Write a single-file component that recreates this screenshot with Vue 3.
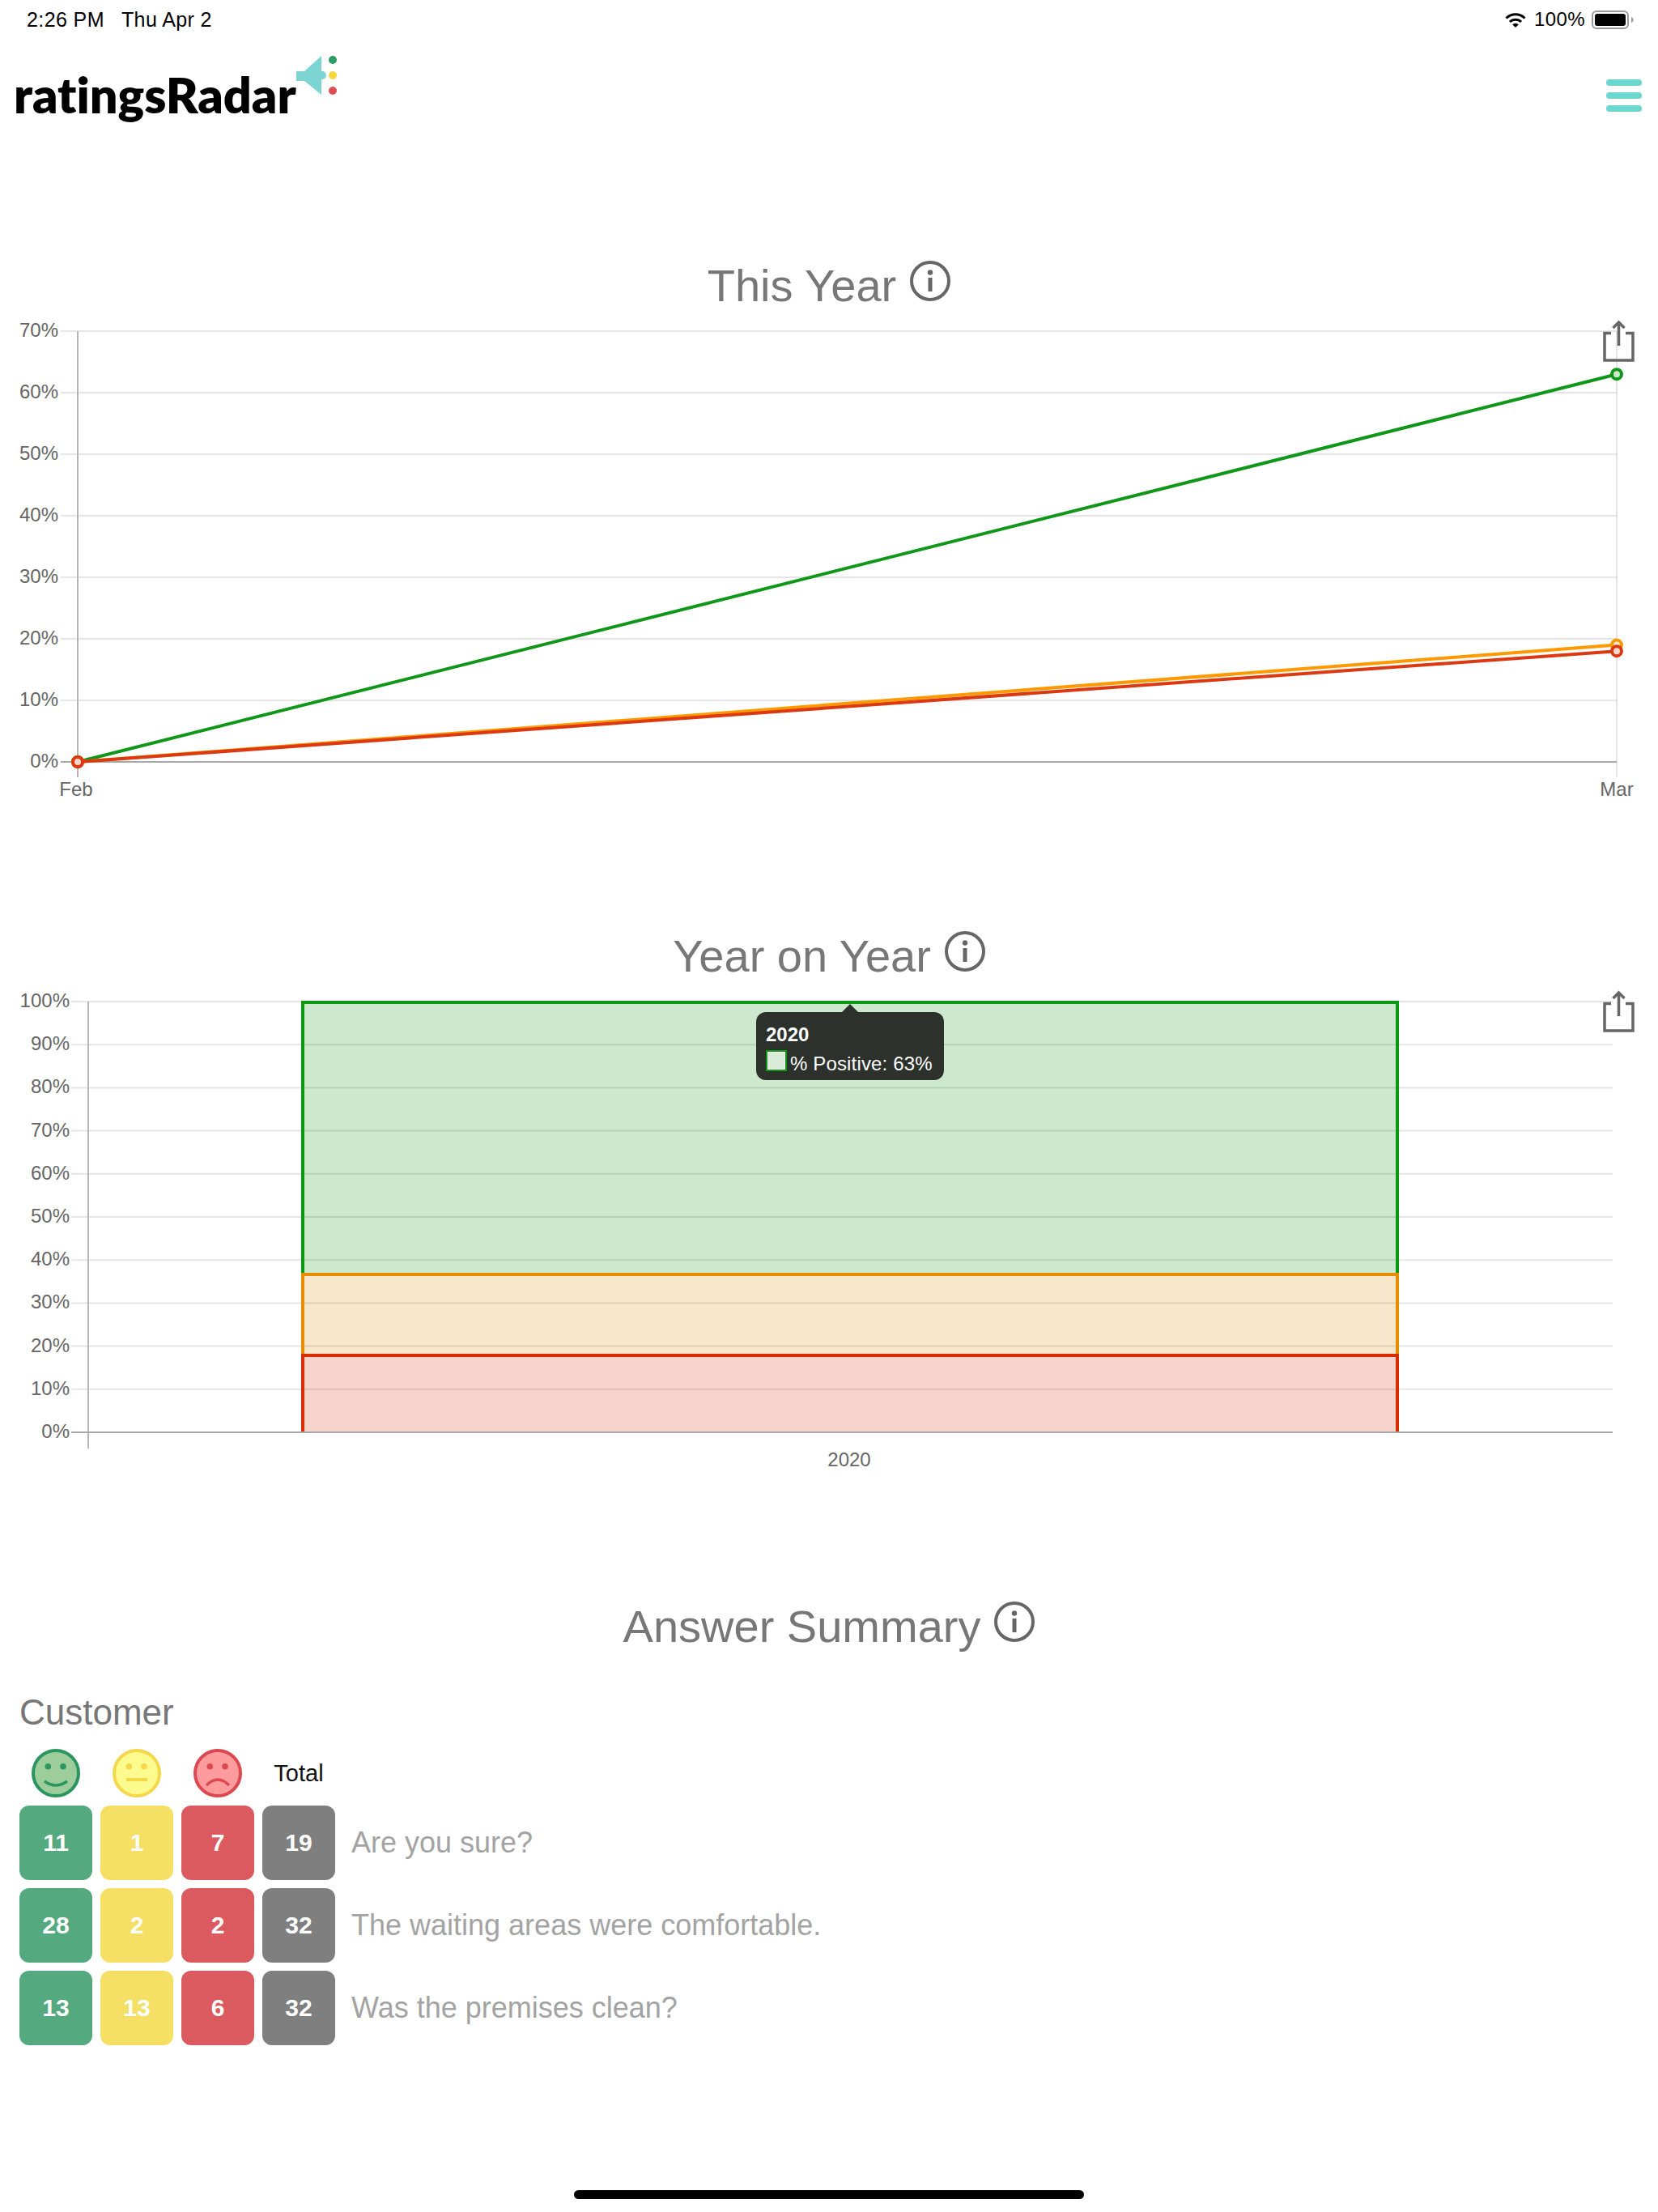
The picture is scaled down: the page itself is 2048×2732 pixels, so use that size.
<template>
  <div class="page">
    <div class="status-bar">
      <div class="status-left">
        <span>2:26 PM</span>
        <span>Thu Apr 2</span>
      </div>
      <div class="status-right">
        <svg class="wifi" width="26" height="19" viewBox="0 0 26 19">
          <path d="M1.5 7.5A16.5 16.5 0 0 1 24.5 7.5" fill="none" stroke="#000" stroke-width="3" />
          <path d="M6 12A10 10 0 0 1 20 12" fill="none" stroke="#000" stroke-width="3" />
          <path d="M13 19L9.2 15.2A5.4 5.4 0 0 1 16.8 15.2Z" fill="#000" />
        </svg>
        <span>100%</span>
        <svg width="52" height="23" viewBox="0 0 52 23">
          <rect x="1" y="1" width="44" height="21" rx="5" fill="none" stroke="#999" stroke-width="2" />
          <rect x="4" y="4" width="38" height="15" rx="3" fill="#000" />
          <path d="M49 8C51 9 51.5 10 51.5 11.5S51 14 49 15Z" fill="#999" />
        </svg>
      </div>
    </div>

    <header class="header">
      <div class="logo">
        <span class="logo-text">ratingsRadar</span>
        <svg class="logo-mark" width="52" height="52" viewBox="0 0 52 52">
          <path d="M1 19H11L32 0V48L11 31H1Z" fill="#7dd5d3" />
          <circle cx="33" cy="24" r="5" fill="#7dd5d3" />
          <circle cx="46" cy="5" r="5" fill="#2b9c64" />
          <circle cx="46" cy="24" r="5" fill="#f5d63f" />
          <circle cx="46" cy="43" r="5" fill="#e04e55" />
        </svg>
      </div>
      <div class="menu">
        <span></span>
        <span></span>
        <span></span>
      </div>
    </header>

    <section class="block">
      <h2 class="block-title">
        <span>This Year</span>
        <svg class="info" width="50" height="50" viewBox="0 0 50 50">
          <circle cx="25" cy="25" r="23" fill="none" stroke="#666" stroke-width="4" />
          <circle cx="25" cy="14.5" r="3.2" fill="#666" />
          <rect x="22.5" y="21" width="5" height="17" fill="#666" />
        </svg>
      </h2>
      <div class="plot">
        <svg class="chart" width="2048" height="610" viewBox="0 0 2048 610">
          <g v-for="t in lineTicks" :key="t.label">
            <line x1="75" x2="1997" :y1="t.y" :y2="t.y" class="grid" />
            <text x="72" :y="t.y + 7" text-anchor="end" class="tick">{{ t.label }}</text>
          </g>
          <line x1="1997" x2="1997" y1="14" y2="565" class="grid" />
          <line x1="96" x2="96" y1="14" y2="565" class="axis-y" />
          <line x1="75" x2="1997" y1="546" y2="546" class="axis-x" />
          <text x="94" y="588" text-anchor="middle" class="tick">Feb</text>
          <text x="1997" y="588" text-anchor="middle" class="tick">Mar</text>
          <g v-for="s in lineSeries" :key="s.color">
            <line x1="96" :y1="lineY(0)" x2="1997" :y2="lineY(s.value)" :stroke="s.color" stroke-width="4" />
            <circle cx="96" :cy="lineY(0)" r="6" :stroke="s.color" stroke-width="4" :fill="s.fill" />
            <circle cx="1997" :cy="lineY(s.value)" r="6" :stroke="s.color" stroke-width="4" :fill="s.fill" />
          </g>
        </svg>
        <svg class="share" width="40" height="54" viewBox="0 0 40 54">
          <path d="M10 16.5H2V50H37V16.5H28" fill="none" stroke="#666" stroke-width="3.5" />
          <path d="M19.5 32V3M12.5 10L19.5 3L26.5 10" fill="none" stroke="#666" stroke-width="3.5" />
        </svg>
      </div>
    </section>

    <section class="block">
      <h2 class="block-title">
        <span>Year on Year</span>
        <svg class="info" width="50" height="50" viewBox="0 0 50 50">
          <circle cx="25" cy="25" r="23" fill="none" stroke="#666" stroke-width="4" />
          <circle cx="25" cy="14.5" r="3.2" fill="#666" />
          <rect x="22.5" y="21" width="5" height="17" fill="#666" />
        </svg>
      </h2>
      <div class="plot">
        <svg class="chart" width="2048" height="610" viewBox="0 0 2048 610">
          <rect x="374" y="15" width="1352" height="336" fill="#cce9cd" />
          <rect x="374" y="351" width="1352" height="100" fill="#f8e7cc" />
          <rect x="374" y="451" width="1352" height="95" fill="#f6d4cb" />
          <g v-for="t in barTicks" :key="t.label">
            <line x1="88" x2="1992" :y1="t.y" :y2="t.y" class="grid" />
            <text x="86" :y="t.y + 7" text-anchor="end" class="tick">{{ t.label }}</text>
          </g>
          <path d="M374 351V15H1726V351" fill="none" stroke="#0a9a12" stroke-width="4" />
          <path d="M374 451V351H1726V451" fill="none" stroke="#e88c00" stroke-width="4" />
          <path d="M374 546V451H1726V546" fill="none" stroke="#d92c00" stroke-width="4" />
          <line x1="109" x2="109" y1="14" y2="566" class="axis-y" />
          <line x1="88" x2="1992" y1="546" y2="546" class="axis-x" />
          <text x="1049" y="588" text-anchor="middle" class="tick">2020</text>
        </svg>
        <svg class="share" width="40" height="54" viewBox="0 0 40 54">
          <path d="M10 16.5H2V50H37V16.5H28" fill="none" stroke="#666" stroke-width="3.5" />
          <path d="M19.5 32V3M12.5 10L19.5 3L26.5 10" fill="none" stroke="#666" stroke-width="3.5" />
        </svg>
        <div class="tooltip">
          <div class="tooltip-title">2020</div>
          <div class="tooltip-row">
            <span class="swatch"></span>
            <span>% Positive: 63%</span>
          </div>
        </div>
      </div>
    </section>

    <section class="summary">
      <h2 class="block-title">
        <span>Answer Summary</span>
        <svg class="info" width="50" height="50" viewBox="0 0 50 50">
          <circle cx="25" cy="25" r="23" fill="none" stroke="#666" stroke-width="4" />
          <circle cx="25" cy="14.5" r="3.2" fill="#666" />
          <rect x="22.5" y="21" width="5" height="17" fill="#666" />
        </svg>
      </h2>
      <div class="group-name">Customer</div>
      <div class="answers">
        <div class="face">
          <svg width="60" height="60" viewBox="0 0 60 60">
            <circle cx="30" cy="30" r="28" fill="#9dcd9b" stroke="#2b9560" stroke-width="4" />
            <circle cx="20.3" cy="21.7" r="3.8" fill="#2b9560" />
            <circle cx="39" cy="21.7" r="3.8" fill="#2b9560" />
            <path d="M16 40Q30 50 44 40" fill="none" stroke="#2b9560" stroke-width="3.5" />
          </svg>
        </div>
        <div class="face">
          <svg width="60" height="60" viewBox="0 0 60 60">
            <circle cx="30" cy="30" r="28" fill="#fdfb8d" stroke="#f6d64a" stroke-width="4" />
            <circle cx="20.3" cy="21.7" r="3.8" fill="#f6d64a" />
            <circle cx="39" cy="21.7" r="3.8" fill="#f6d64a" />
            <line x1="17" x2="43" y1="38" y2="38" stroke="#f6d64a" stroke-width="4" />
          </svg>
        </div>
        <div class="face">
          <svg width="60" height="60" viewBox="0 0 60 60">
            <circle cx="30" cy="30" r="28" fill="#fd9b9d" stroke="#dc4850" stroke-width="4" />
            <circle cx="20.3" cy="21.7" r="3.8" fill="#dc4850" />
            <circle cx="39" cy="21.7" r="3.8" fill="#dc4850" />
            <path d="M16 45Q30 31 44 45" fill="none" stroke="#dc4850" stroke-width="3.5" />
          </svg>
        </div>
        <div class="face total-label">Total</div>
        <div></div>

        <template v-for="a in answers" :key="a.question">
          <div class="count good">{{ a.good }}</div>
          <div class="count okay">{{ a.okay }}</div>
          <div class="count bad">{{ a.bad }}</div>
          <div class="count total">{{ a.good + a.okay + a.bad }}</div>
          <div class="question">{{ a.question }}</div>
        </template>
      </div>
    </section>

    <div class="home-bar"></div>
  </div>
</template>

<script setup>
const lineY = (v) => 546 - v * 7.6
const barY = (v) => 546 - v * 5.32

const lineTicks = [70, 60, 50, 40, 30, 20, 10, 0].map((v) => ({ label: v + '%', y: lineY(v) }))
const barTicks = [100, 90, 80, 70, 60, 50, 40, 30, 20, 10, 0].map((v) => ({ label: v + '%', y: barY(v) }))

const lineSeries = [
  { value: 63, color: '#109618', fill: '#cfe9d0' },
  { value: 19, color: '#ff9900', fill: '#ffebcc' },
  { value: 18, color: '#dc3912', fill: '#f8d7d0' },
]

const answers = [
  { good: 11, okay: 1, bad: 7, question: 'Are you sure?' },
  { good: 28, okay: 2, bad: 2, question: 'The waiting areas were comfortable.' },
  { good: 13, okay: 13, bad: 6, question: 'Was the premises clean?' },
]
</script>

<style scoped>
.page {
  position: relative;
  width: 2048px;
  height: 2732px;
  overflow: hidden;
  background: #fff;
  font-family: "Liberation Sans", Arial, sans-serif;
}

.status-bar {
  display: flex;
  justify-content: space-between;
  align-items: center;
  height: 48px;
  padding: 0 30px 0 33px;
  font-size: 25px;
  color: #000;
}

.status-left {
  display: flex;
  gap: 21px;
  letter-spacing: 0.4px;
}

.status-right {
  display: flex;
  align-items: center;
  gap: 8px;
  font-size: 24px;
  letter-spacing: 0.4px;
}

.wifi {
  margin-right: 2px;
}

.header {
  display: flex;
  justify-content: space-between;
  align-items: flex-start;
  box-sizing: border-box;
  height: 273px;
  padding: 21px 20px 0 17px;
}

.logo {
  display: flex;
  align-items: flex-start;
}

.logo-text {
  margin-top: 16px;
  font-family: Lato, sans-serif;
  font-weight: 800;
  font-size: 61px;
  line-height: 64px;
  font-variant-ligatures: none;
  color: #000;
}

.logo-mark {
  margin-left: -1px;
}

.menu {
  display: flex;
  flex-direction: column;
  gap: 8px;
  margin-top: 29px;
}

.menu span {
  display: block;
  width: 44px;
  height: 8px;
  border-radius: 4px;
  background: #6bd7ce;
}

.block {
  margin-bottom: 144px;
}

.block-title {
  display: flex;
  justify-content: center;
  align-items: flex-start;
  gap: 17px;
  height: 64px;
  margin: 0 0 10px;
  font-size: 56px;
  line-height: 64px;
  font-weight: 400;
  color: #777;
}

.info {
  margin-top: 1px;
}

.plot {
  position: relative;
  height: 610px;
}

.chart {
  display: block;
}

.grid {
  stroke: rgba(0, 0, 0, 0.1);
  stroke-width: 2;
}

.axis-y {
  stroke: #b5b5b5;
  stroke-width: 2;
}

.axis-x {
  stroke: #a8a8a8;
  stroke-width: 2;
}

.tick {
  font-size: 24px;
  fill: #666;
}

.share {
  position: absolute;
  top: 0;
  right: 28px;
}

.tooltip {
  position: absolute;
  left: 934px;
  top: 27px;
  width: 232px;
  height: 84px;
  box-sizing: border-box;
  padding: 14px 12px 0;
  border-radius: 12px;
  background: #2c312c;
  color: #fff;
  font-size: 24px;
  line-height: 28px;
}

.tooltip::before {
  content: "";
  position: absolute;
  left: 106px;
  top: -10px;
  border-left: 10px solid transparent;
  border-right: 10px solid transparent;
  border-bottom: 10px solid #2c312c;
}

.tooltip-title {
  font-weight: 700;
}

.tooltip-row {
  display: flex;
  align-items: flex-start;
  gap: 4px;
  margin-top: 8px;
  letter-spacing: 0.15px;
}

.swatch {
  display: block;
  flex: none;
  width: 26px;
  height: 26px;
  margin-top: -3px;
  box-sizing: border-box;
  border: 2px solid #0a9a12;
  outline: 1px solid #fff;
  outline-offset: -3px;
  background: #d8ead8;
}

.summary {
  padding: 0 24px;
}

.summary .block-title {
  margin: 0 -24px 49px;
}

.group-name {
  height: 50px;
  font-size: 44px;
  line-height: 50px;
  color: #777;
}

.answers {
  display: grid;
  grid-template-columns: 90px 90px 90px 90px 1fr;
  grid-auto-rows: 92px;
  grid-template-rows: 60px;
  gap: 10px;
  margin-top: 20px;
}

.face {
  display: flex;
  justify-content: center;
  align-items: center;
}

.total-label {
  font-size: 29px;
  color: #111;
}

.count {
  display: flex;
  justify-content: center;
  align-items: center;
  border-radius: 12px;
  font-size: 30px;
  font-weight: 700;
  color: #fff;
}

.good {
  background: #54a97e;
}

.okay {
  background: #f5df64;
}

.bad {
  background: #db5a60;
}

.total {
  background: #7f7f7f;
}

.question {
  display: flex;
  align-items: center;
  padding-left: 10px;
  font-size: 36px;
  color: #a3a3a3;
}

.home-bar {
  width: 630px;
  height: 11px;
  margin: 179px auto 0;
  border-radius: 6px;
  background: #000;
}
</style>

<style>
body {
  margin: 0;
}
</style>
